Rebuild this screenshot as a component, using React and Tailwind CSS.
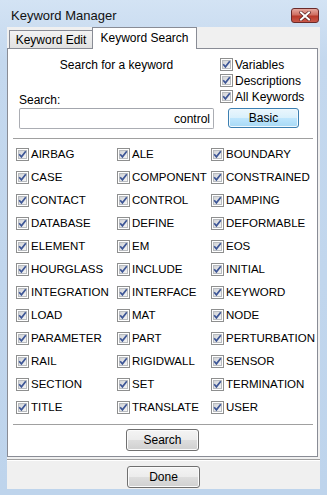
import React from "react";

const F = { fontFamily: '"Liberation Sans", Arial, sans-serif' };

function Check() {
  return (
    <svg width="13" height="13" viewBox="0 0 13 13" className="shrink-0 block">
      <defs>
        <linearGradient id="cbg" x1="0" y1="0" x2="1" y2="1">
          <stop offset="0" stopColor="#cfd1d4" />
          <stop offset="1" stopColor="#f7f7f7" />
        </linearGradient>
      </defs>
      <rect x="0.5" y="0.5" width="12" height="12" fill="#ffffff" stroke="#8e8f8f" />
      <rect x="2.5" y="2.5" width="8" height="8" fill="url(#cbg)" stroke="#b9bcc0" />
      <path d="M3.2 6.3 L5.4 8.8 L9.8 3.2" fill="none" stroke="#3d5696" strokeWidth="1.7" />
    </svg>
  );
}

const KW = [
  ["AIRBAG", "ALE", "BOUNDARY"],
  ["CASE", "COMPONENT", "CONSTRAINED"],
  ["CONTACT", "CONTROL", "DAMPING"],
  ["DATABASE", "DEFINE", "DEFORMABLE"],
  ["ELEMENT", "EM", "EOS"],
  ["HOURGLASS", "INCLUDE", "INITIAL"],
  ["INTEGRATION", "INTERFACE", "KEYWORD"],
  ["LOAD", "MAT", "NODE"],
  ["PARAMETER", "PART", "PERTURBATION"],
  ["RAIL", "RIGIDWALL", "SENSOR"],
  ["SECTION", "SET", "TERMINATION"],
  ["TITLE", "TRANSLATE", "USER"],
];

function Btn({ children, cls = "" }) {
  return (
    <div
      className={
        "w-[73px] h-[22px] rounded-[3px] border border-[#707070] bg-[linear-gradient(to_bottom,#f4f4f4_0%,#ececec_48%,#dddddd_52%,#d0d0d0_100%)] flex items-center justify-center text-[12px] text-black shadow-[inset_0_0_0_1px_#fbfbfb] " +
        cls
      }
    >
      {children}
    </div>
  );
}

export default function App() {
  return (
    <div
      style={F}
      className="w-[327px] h-[495px] bg-[linear-gradient(to_bottom,#d3e3f4_0%,#c4d8ee_12%,#bed4ec_100%)] flex flex-col overflow-hidden"
    >
      {/* title bar */}
      <div className="h-[27px] flex items-start justify-between pl-[11px] pr-[8px]">
        <div className="pt-[8px] text-[13px] leading-[15px] text-[#111]">Keyword Manager</div>
        <div className="mt-[8px] w-[28px] h-[15px] rounded-[3px] border border-[#6a2a2a] bg-[linear-gradient(to_bottom,#e6a9a0_0%,#cf6f62_45%,#b8392a_55%,#c9584a_100%)] flex items-center justify-center">
          <svg width="12" height="10" viewBox="0 0 12 10">
            <path d="M2 1.5 L10 8.5 M10 1.5 L2 8.5" stroke="#5a2020" strokeWidth="3.4" strokeLinecap="square" />
            <path d="M2 1.5 L10 8.5 M10 1.5 L2 8.5" stroke="#ffffff" strokeWidth="2" strokeLinecap="square" />
          </svg>
        </div>
      </div>

      {/* client */}
      <div className="mx-[7px] w-[313px] h-[462px] bg-[#f0f0f0] flex flex-col">
        {/* tabs */}
        <div className="h-[21px] flex items-end relative z-10">
          <div className="ml-[2px] w-[84px] h-[18px] border border-b-0 border-[#898c95] bg-[linear-gradient(to_bottom,#f3f3f3,#e1e1e1)] flex items-center justify-center text-[12px] text-black">
            Keyword Edit
          </div>
          <div className="-ml-[1px] w-[105px] h-[22px] -mb-[1px] border border-b-0 border-[#898c95] bg-white flex items-center justify-center text-[12px] text-black pb-[1px]">
            Keyword Search
          </div>
        </div>

        {/* panel */}
        <div className="w-[311px] border border-[#898c95] bg-white flex flex-col">
          <div className="flex">
            <div className="ml-[11px] w-[195px] flex flex-col">
              <div className="pt-[9px] h-[22px] text-[12px] leading-[14px] text-center text-black">Search for a keyword</div>
              <div className="mt-[22px] h-[14px] text-[12px] leading-[14px] text-black">Search:</div>
              <div className="mt-[1px] h-[21px] rounded-[2px] border border-[#abadb3] border-t-[#a3a6ad] bg-white flex items-center justify-end pr-[3px] text-[12px] text-black">
                control
              </div>
            </div>
            <div className="ml-[6px] pt-[9px] flex flex-col">
              {["Variables", "Descriptions", "All Keywords"].map((t) => (
                <div key={t} className="h-[16px] flex items-start gap-[2px]">
                  <Check />
                  <span className="text-[12px] leading-[14px] text-black">{t}</span>
                </div>
              ))}
              <div className="mt-[2px] ml-[8px] w-[71px] h-[20px] rounded-[3px] border border-[#3c7fb1] bg-[linear-gradient(to_bottom,#eaf6fd_0%,#d9f0fc_48%,#bee6fd_52%,#a7d9f5_100%)] shadow-[inset_0_0_0_1px_#f0f9fe] flex items-center justify-center text-[12px] text-black">
                Basic
              </div>
            </div>
          </div>

          <div className="mt-[9px] ml-[5px] w-[300px] h-[2px] border-t border-[#a0a0a0] border-b border-b-white" />

          <div className="mt-[3px] ml-[8px] grid grid-cols-[101px_94px_1fr]">
            {KW.flat().map((k) => (
              <div key={k} className="h-[23px] flex items-center gap-[2px]">
                <Check />
                <span className="text-[11.5px] leading-[13px] text-black whitespace-nowrap">{k}</span>
              </div>
            ))}
          </div>

          <div className="mt-[5px] ml-[5px] w-[300px] h-0 border-t border-[#a0a0a0]" />
          <div className="mt-[4px] mb-[5px] flex justify-center">
            <Btn>Search</Btn>
          </div>
        </div>

        <div className="mt-[2px] h-[2px] border-t border-[#a0a0a0] border-b border-b-white" />
        <div className="mt-[5px] flex justify-center">
          <Btn>Done</Btn>
        </div>
      </div>
    </div>
  );
}
